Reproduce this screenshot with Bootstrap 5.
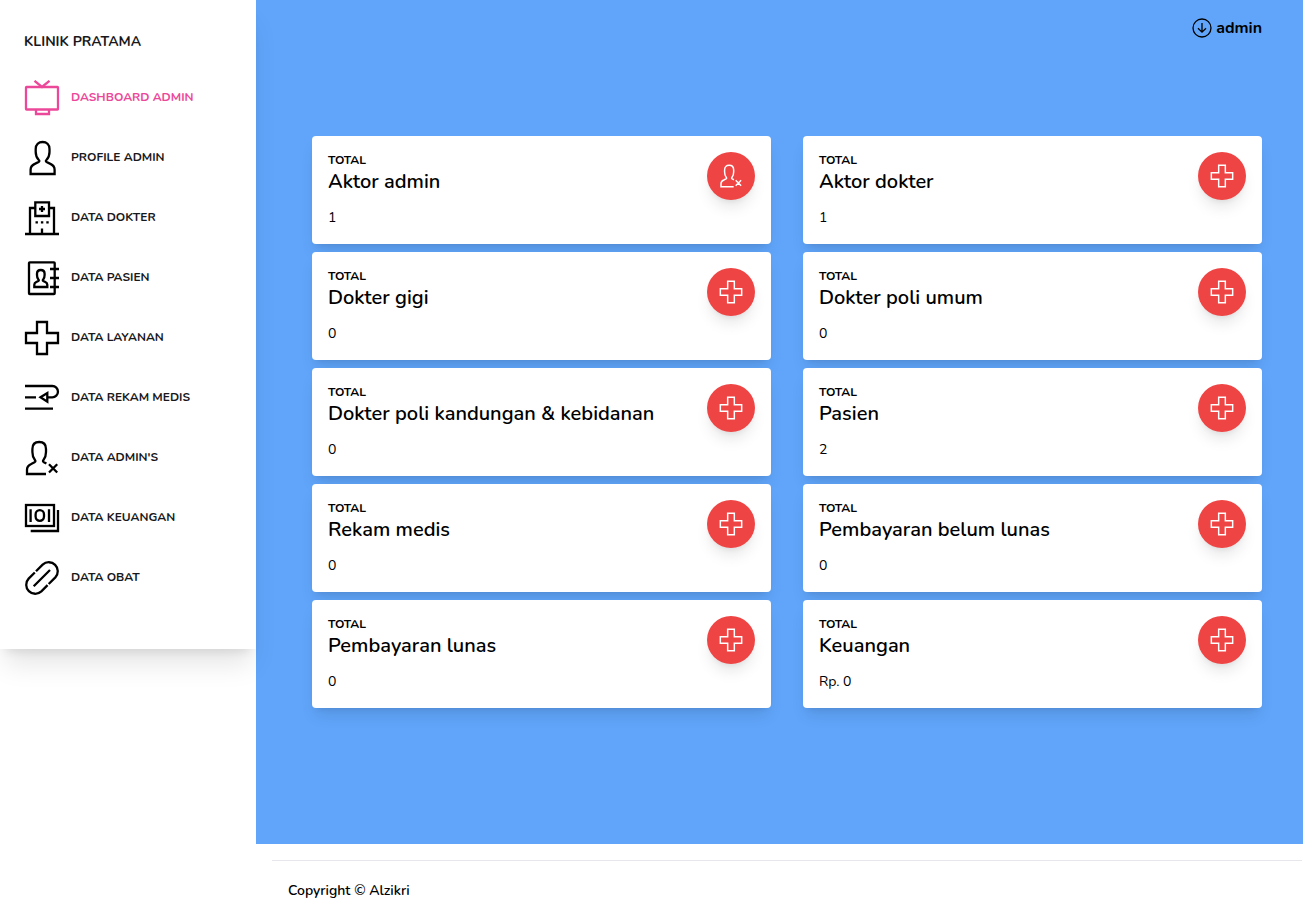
<!DOCTYPE html>
<html lang="id">
<head>
<meta charset="utf-8">
<meta name="viewport" content="width=device-width, initial-scale=1">
<title>Klinik Pratama - Dashboard Admin</title>
<link href="https://cdn.jsdelivr.net/npm/bootstrap@5.3.0/dist/css/bootstrap.min.css" rel="stylesheet">
<style>
  body { font-family: Nunito, Lato, sans-serif; font-size: 14px; line-height: 20px; color: #000; background: #fff; }
  a { color: inherit; text-decoration: none; }
  .side-panel { width: 256px; z-index: 2; padding: 32px 24px 53px; background: #fff;
    box-shadow: 0 20px 25px -5px rgba(0,0,0,.1), 0 8px 10px -6px rgba(0,0,0,.1); }
  .brand { color: #18181b; font-size: 14px; line-height: 20px; }
  .side-menu { gap: 24px; margin-top: 28px; }
  .side-menu a { gap: 11px; height: 36px; font-size: 12px; line-height: 16px; }
  .side-menu a.active, .side-menu a.active span { color: #ec4899; }
  .side-menu span { color: #18181b; padding-bottom: 2px; }
  .side-menu svg { width: 36px; height: 36px; stroke-width: 2.3; }
  .line-icon { fill: none; stroke: currentColor; flex: none; }
  .hero { background: #60a5fa; padding: 0 41px 136px 56px; }
  .top-bar { height: 136px; padding-top: 16px; }
  .user-toggle { gap: 4px; font-size: 16px; line-height: 24px; color: #000; }
  .user-toggle svg { width: 20px; height: 20px; }
  .stat-card { border: 0; border-radius: 4px; padding: 16px; color: #000;
    box-shadow: 0 10px 15px -3px rgba(0,0,0,.1), 0 4px 6px -4px rgba(0,0,0,.1); }
  .stat-card h5 { font-size: 12px; line-height: 16px; }
  .stat-card h2 { font-size: 20px; line-height: 28px; }
  .stat-card p { margin-top: 12px; }
  .stat-icon { width: 48px; height: 48px; background: #ef4444;
    box-shadow: 0 10px 15px -3px rgba(0,0,0,.1), 0 4px 6px -4px rgba(0,0,0,.1); }
  .stat-icon svg { width: 24px; height: 24px; stroke-width: 2.2; }
  .page-footer { padding: 16px 1px 20px 16px; }
  .page-footer hr { border-color: #e5e7eb; opacity: 1; }
  .page-footer p { padding: 20px 16px 0; }
</style>
</head>
<body>
<svg class="d-none" aria-hidden="true">
  <symbol id="i-tv" viewBox="0 0 36 36"><rect x="2" y="7" width="32" height="22.5" rx=".6"/><path d="M10.500 .8L18 7l7.500-6.200M12 30v4h13v-4"/></symbol>
  <symbol id="i-user" viewBox="0 0 36 36"><path d="M6.600 34h24v-4.300c0-2.800-1.500-4.600-4.200-5.800L22.600 22c-1-.6-1-1.200 0-2.200 1.800-2 2.900-4.400 2.900-7.800V9c0-4.500-2.900-7-6.900-7s-6.900 2.500-6.900 7v3c0 3.400 1.100 5.800 2.900 7.800 1 1 1 1.600 0 2.200l-3.800 1.900C8.100 25.100 6.600 26.900 6.600 29.700z"/></symbol>
  <symbol id="i-hospital" viewBox="0 0 36 36"><path d="M1 34h34M6 34V8h5M25 8h5v26M11.300 2.300h13.700V16H11.300zM15 9h6M18 6v6M18 28.500V34"/><path d="M11.500 22.300h2.400M16.900 22.300h2.400M22.300 22.300h2.400"/></symbol>
  <symbol id="i-contacts" viewBox="0 0 36 36"><rect x="5" y="2.300" width="25.700" height="31.700" rx=".8"/><path d="M26 9h9M26 18h9M26 27h9M10.300 27h13v-2.200c0-1.300-.8-2.200-2-2.800l-2-1c-.7-.4-.7-1 0-1.700 1-1.200 1.300-2.500 1.300-4.300v-1.300c0-2.500-1.500-3.700-3.800-3.700S13 11.200 13 13.700V15c0 1.800.3 3.100 1.300 4.300.7.7.7 1.300 0 1.700l-2 1c-1.200.6-2 1.500-2 2.800z"/></symbol>
  <symbol id="i-cross" viewBox="0 0 36 36"><path d="M13 2h10v11h11v10H23v11H13V23H2V13h11z"/></symbol>
  <symbol id="i-record" viewBox="0 0 36 36"><path d="M1 6h27.300a5.650 5.650 0 0 1 0 11.300H24M1 17.300h11M1 28.700h28M16.500 17.300l6.800-4.300v8.600z"/></symbol>
  <symbol id="i-userx" viewBox="0 0 36 36"><path d="M22 34H3v-4.300c0-2.700 1.500-4.500 4.200-5.700l3.300-1.700c1.200-.7 1.200-1.400.3-2.500C9.200 17.800 8.400 15.600 8.400 12V9c0-4.500 2.700-7 6.800-7s6.800 2.500 6.800 7v3c0 3.600-.8 5.800-2.400 7.800-.9 1.100-.9 1.800.3 2.500l2.500 1.300M25 24.300l8.200 8.200M33.200 24.300L25 32.500"/></symbol>
  <symbol id="i-money" viewBox="0 0 36 36"><rect x="2" y="5" width="28" height="21"/><path d="M6.600 9.300v12.700M25 9.300v12.700M34 10v21H6.700"/><rect x="11.600" y="10.200" width="8.400" height="10.600" rx="4.200"/></symbol>
  <symbol id="i-clip" viewBox="0 0 36 36"><path d="M10.800 12.500l-6.160 6.140A9 9 0 0 0 17.360 31.360l6.200-6.200M12 11.300l6.640-6.660A9 9 0 0 1 31.360 17.360L24.700 24M9.700 26.300L26 10"/></symbol>
  <symbol id="i-down" viewBox="0 0 20 20"><circle cx="10" cy="10" r="9"/><path d="M10 5v9M6 10.200l4 4 4-4"/></symbol>
</svg>

<div class="d-flex align-items-start min-vh-100">
  <nav class="side-panel position-relative flex-shrink-0" aria-label="Menu utama">
    <a class="brand d-block fw-bold" href="#">KLINIK PRATAMA</a>
    <ul class="side-menu list-unstyled d-flex flex-column mb-0 fw-bold">
      <li><a class="active d-flex align-items-center" aria-current="page" href="#"><svg class="line-icon"><use href="#i-tv"/></svg><span>DASHBOARD ADMIN</span></a></li>
      <li><a class="d-flex align-items-center" href="#"><svg class="line-icon"><use href="#i-user"/></svg><span>PROFILE ADMIN</span></a></li>
      <li><a class="d-flex align-items-center" href="#"><svg class="line-icon"><use href="#i-hospital"/></svg><span>DATA DOKTER</span></a></li>
      <li><a class="d-flex align-items-center" href="#"><svg class="line-icon"><use href="#i-contacts"/></svg><span>DATA PASIEN</span></a></li>
      <li><a class="d-flex align-items-center" href="#"><svg class="line-icon"><use href="#i-cross"/></svg><span>DATA LAYANAN</span></a></li>
      <li><a class="d-flex align-items-center" href="#"><svg class="line-icon"><use href="#i-record"/></svg><span>DATA REKAM MEDIS</span></a></li>
      <li><a class="d-flex align-items-center" href="#"><svg class="line-icon"><use href="#i-userx"/></svg><span>DATA ADMIN'S</span></a></li>
      <li><a class="d-flex align-items-center" href="#"><svg class="line-icon"><use href="#i-money"/></svg><span>DATA KEUANGAN</span></a></li>
      <li><a class="d-flex align-items-center" href="#"><svg class="line-icon"><use href="#i-clip"/></svg><span>DATA OBAT</span></a></li>
    </ul>
  </nav>

  <div class="flex-grow-1">
    <main class="hero">
      <div class="top-bar d-flex justify-content-end align-items-start">
        <button type="button" class="user-toggle btn border-0 p-0 d-flex align-items-center fw-bold"><svg class="line-icon" stroke-width="1.3"><use href="#i-down"/></svg>admin</button>
      </div>
      <div class="row row-cols-1 row-cols-md-2 gy-2" style="--bs-gutter-x:32px">
        <div class="col"><div class="stat-card card flex-row justify-content-between"><div><h5 class="mb-0 fw-bold">TOTAL</h5><h2 class="mb-0 fw-semibold">Aktor admin</h2><p class="mb-0">1</p></div><div class="stat-icon rounded-circle text-white d-flex align-items-center justify-content-center flex-shrink-0"><svg class="line-icon"><use href="#i-userx"/></svg></div></div></div>
        <div class="col"><div class="stat-card card flex-row justify-content-between"><div><h5 class="mb-0 fw-bold">TOTAL</h5><h2 class="mb-0 fw-semibold">Aktor dokter</h2><p class="mb-0">1</p></div><div class="stat-icon rounded-circle text-white d-flex align-items-center justify-content-center flex-shrink-0"><svg class="line-icon"><use href="#i-cross"/></svg></div></div></div>
        <div class="col"><div class="stat-card card flex-row justify-content-between"><div><h5 class="mb-0 fw-bold">TOTAL</h5><h2 class="mb-0 fw-semibold">Dokter gigi</h2><p class="mb-0">0</p></div><div class="stat-icon rounded-circle text-white d-flex align-items-center justify-content-center flex-shrink-0"><svg class="line-icon"><use href="#i-cross"/></svg></div></div></div>
        <div class="col"><div class="stat-card card flex-row justify-content-between"><div><h5 class="mb-0 fw-bold">TOTAL</h5><h2 class="mb-0 fw-semibold">Dokter poli umum</h2><p class="mb-0">0</p></div><div class="stat-icon rounded-circle text-white d-flex align-items-center justify-content-center flex-shrink-0"><svg class="line-icon"><use href="#i-cross"/></svg></div></div></div>
        <div class="col"><div class="stat-card card flex-row justify-content-between"><div><h5 class="mb-0 fw-bold">TOTAL</h5><h2 class="mb-0 fw-semibold">Dokter poli kandungan &amp; kebidanan</h2><p class="mb-0">0</p></div><div class="stat-icon rounded-circle text-white d-flex align-items-center justify-content-center flex-shrink-0"><svg class="line-icon"><use href="#i-cross"/></svg></div></div></div>
        <div class="col"><div class="stat-card card flex-row justify-content-between"><div><h5 class="mb-0 fw-bold">TOTAL</h5><h2 class="mb-0 fw-semibold">Pasien</h2><p class="mb-0">2</p></div><div class="stat-icon rounded-circle text-white d-flex align-items-center justify-content-center flex-shrink-0"><svg class="line-icon"><use href="#i-cross"/></svg></div></div></div>
        <div class="col"><div class="stat-card card flex-row justify-content-between"><div><h5 class="mb-0 fw-bold">TOTAL</h5><h2 class="mb-0 fw-semibold">Rekam medis</h2><p class="mb-0">0</p></div><div class="stat-icon rounded-circle text-white d-flex align-items-center justify-content-center flex-shrink-0"><svg class="line-icon"><use href="#i-cross"/></svg></div></div></div>
        <div class="col"><div class="stat-card card flex-row justify-content-between"><div><h5 class="mb-0 fw-bold">TOTAL</h5><h2 class="mb-0 fw-semibold">Pembayaran belum lunas</h2><p class="mb-0">0</p></div><div class="stat-icon rounded-circle text-white d-flex align-items-center justify-content-center flex-shrink-0"><svg class="line-icon"><use href="#i-cross"/></svg></div></div></div>
        <div class="col"><div class="stat-card card flex-row justify-content-between"><div><h5 class="mb-0 fw-bold">TOTAL</h5><h2 class="mb-0 fw-semibold">Pembayaran lunas</h2><p class="mb-0">0</p></div><div class="stat-icon rounded-circle text-white d-flex align-items-center justify-content-center flex-shrink-0"><svg class="line-icon"><use href="#i-cross"/></svg></div></div></div>
        <div class="col"><div class="stat-card card flex-row justify-content-between"><div><h5 class="mb-0 fw-bold">TOTAL</h5><h2 class="mb-0 fw-semibold">Keuangan</h2><p class="mb-0">Rp. 0</p></div><div class="stat-icon rounded-circle text-white d-flex align-items-center justify-content-center flex-shrink-0"><svg class="line-icon"><use href="#i-cross"/></svg></div></div></div>
      </div>
    </main>
    <footer class="page-footer">
      <hr class="m-0">
      <p class="mb-0 fw-semibold">Copyright © Alzikri</p>
    </footer>
  </div>
</div>
<script src="https://cdn.jsdelivr.net/npm/bootstrap@5.3.0/dist/js/bootstrap.bundle.min.js"></script>
</body>
</html>
